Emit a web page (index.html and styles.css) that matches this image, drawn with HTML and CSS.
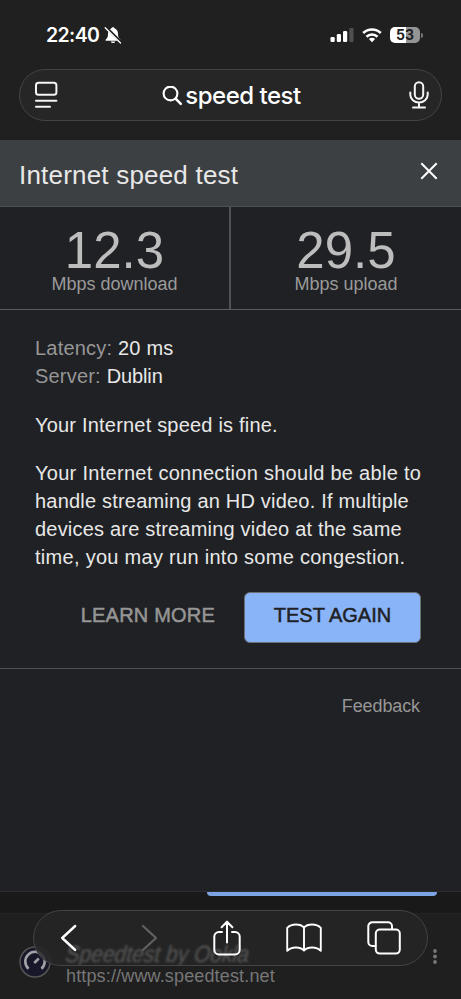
FILE: index.html
```html
<!DOCTYPE html>
<html lang="en">
<head>
<meta charset="utf-8">
<title>speed test</title>
<link rel="stylesheet" href="styles.css">
</head>
<body>
<div class="phone">
  <header class="chrome">
    <div class="status">
      <div class="status-left">
        <span class="clock">22:40</span>
        <svg width="18" height="19" viewBox="0 0 18 19"><path d="M9 1.300C8 1.300 7.400 1.900 7.200 2.600 4.700 3.500 4 5.600 4 8c0 3-.6 3.700-2 5.200-.8.9-.5 1.500.4 1.500h13.200c.9 0 1.200-.6.4-1.500-1.400-1.500-2-2.200-2-5.200 0-2.400-.7-4.500-3.200-5.400C10.600 1.900 10 1.300 9 1.300zM6.700 15.600a2.400 2.100 0 0 0 4.600 0z" fill="#fff"/><path d="M1.900 1.200 17 16.300" stroke="#202020" stroke-width="2.800"/><path d="M1.200 1.700 16.500 17" stroke="#fff" stroke-width="1.300" stroke-linecap="round"/></svg>
      </div>
      <div class="status-right">
        <svg width="24" height="16" viewBox="0 0 24 16"><rect x="0.500" y="10" width="4.200" height="5" rx="1.200" fill="#fff"/><rect x="6.800" y="7" width="4.200" height="8" rx="1.200" fill="#fff"/><rect x="13" y="4" width="4.200" height="11" rx="1.200" fill="#fff"/><rect x="19.300" y="1" width="4.200" height="14" rx="1.200" fill="#505050"/></svg>
        <svg class="wifi" width="20" height="16" viewBox="0 0 20 16" fill="none" stroke="#fff" stroke-width="2.600"><path d="M1.200 6a12.700 12.700 0 0 1 17.600 0M4.500 9.700a8 8 0 0 1 11 0"/><path d="M10 15.200 6.900 12.100a4.400 4.400 0 0 1 6.200 0z" fill="#fff" stroke="none"/></svg>
        <div class="battery"><span>53</span></div>
        <i class="battery-cap"></i>
      </div>
    </div>
    <div class="search">
      <svg width="24" height="28" viewBox="0 0 24 28" fill="none" stroke="#f5f5f5" stroke-width="2" stroke-linecap="round"><rect x="2" y="1.700" width="20.400" height="12" rx="2.500"/><path d="M2 19.700h20.400M2 25.800h14"/></svg>
      <div class="query">
        <svg width="20" height="20" viewBox="0 0 20 20" fill="none" stroke="#fff" stroke-width="2.100" stroke-linecap="round"><circle cx="8.500" cy="7.500" r="6.900"/><path d="m13.800 12.800 5 5" stroke-width="2.600"/></svg>
        <span>speed test</span>
      </div>
      <svg width="20" height="28" viewBox="0 0 20 28" fill="none" stroke="#f5f5f5" stroke-width="2" stroke-linecap="round"><rect x="5.800" y="1.200" width="8.400" height="16.600" rx="4.200"/><path d="M1.300 11.500v2.200a8.700 7.700 0 0 0 17.400 0v-2.200M10 21.500v4.600M4 26.500h12"/></svg>
    </div>
  </header>

  <main class="card">
    <div class="card-head">
      <h1>Internet speed test</h1>
      <svg width="18" height="18" viewBox="0 0 18 18" stroke="#fff" stroke-width="2"><path d="m1.300 1.300 15.400 15.400M16.700 1.300 1.300 16.700"/></svg>
    </div>
    <div class="metrics">
      <div class="metric"><strong>12.3</strong><span>Mbps download</span></div>
      <div class="metric"><strong>29.5</strong><span>Mbps upload</span></div>
    </div>
    <div class="details">
      <p><span class="muted">Latency:</span> 20 ms<br><span class="muted">Server:</span> <span class="tight">Dublin</span></p>
      <p>Your Internet speed is fine.</p>
      <p class="summary"><span class="wide">Your Internet connection should be able to</span><br>handle streaming an HD video. If multiple<br>devices are streaming video at the same<br><span class="wide">time, you may run into some congestion.</span></p>
      <div class="actions">
        <a class="learn">LEARN MORE</a>
        <button class="again">TEST AGAIN</button>
      </div>
    </div>
    <div class="feedback">Feedback</div>
  </main>

  <div class="gap"><i class="tab-edge"></i></div>

  <section class="result">
    <svg class="favicon" width="32" height="32" viewBox="0 0 32 32" fill="none"><circle cx="16" cy="16" r="15" fill="#171729" stroke="#555" stroke-width="1.500"/><path d="M9.600 22.800A9.700 9.700 0 1 1 22.400 22.800" stroke="#a2a2a6" stroke-width="2.600"/><path d="m15.200 17 4.600-4.500" stroke="#a2a2a6" stroke-width="2.600"/></svg>
    <div class="result-text">
      <div class="result-title">Speedtest by Ookla</div>
      <div class="result-url">https://www.speedtest.net</div>
    </div>
    <svg class="more" width="6" height="18" viewBox="0 0 6 18" fill="#777"><circle cx="3" cy="3" r="1.900"/><circle cx="3" cy="8.500" r="1.900"/><circle cx="3" cy="14" r="1.900"/></svg>
  </section>

  <nav class="toolbar">
    <svg width="18" height="28" viewBox="0 0 18 28" fill="none" stroke="#fff" stroke-width="2.400" stroke-linecap="round" stroke-linejoin="round"><path d="M15.200 2 2.200 14l13 12"/></svg>
    <svg class="forward" width="18" height="28" viewBox="0 0 18 28" fill="none" stroke="#606060" stroke-width="2.300" stroke-linecap="round" stroke-linejoin="round"><path d="m2 2 13 12-13 12"/></svg>
    <svg class="share" width="28" height="36" viewBox="0 0 28 36" fill="none" stroke="#fff" stroke-width="2" stroke-linecap="round" stroke-linejoin="round"><path d="M9 12H6a4.700 4.700 0 0 0-4.700 4.700v13A4.700 4.700 0 0 0 6 34.400h16a4.700 4.700 0 0 0 4.700-4.700v-13A4.700 4.700 0 0 0 22 12h-3M14 22.500V1.700M8.600 7.200l5.400-5.500 5.400 5.500"/></svg>
    <svg class="book" width="36" height="30" viewBox="0 0 36 30" fill="none" stroke="#fff" stroke-width="1.900" stroke-linejoin="round"><path d="M18 4.500C14.500.5 5.500.3 1.200 4.800v23c4.300-4.300 12.800-4.500 16.800-.3 4-4.200 12.500-4 16.800.3v-23C30.500.3 21.500.5 18 4.500v23"/></svg>
    <svg width="34" height="34" viewBox="0 0 34 34" fill="none" stroke="#fff" stroke-width="2"><path d="M8.500 25H5.300a4 4 0 0 1-4-4V5.300a4 4 0 0 1 4-4H21a4 4 0 0 1 4 4v3.200"/><rect x="8.800" y="8.600" width="24" height="24" rx="4"/></svg>
  </nav>
</div>
</body>
</html>
```

FILE: styles.css
```css
* { box-sizing: border-box; }
body {
  margin: 0;
  background: #1c1c1c;
  font-family: "Liberation Sans", Arial, sans-serif;
  color: #e8e8e8;
}
svg { display: block; flex: none; }
.phone {
  position: relative;
  width: 461px;
  height: 999px;
  overflow: hidden;
  display: flex;
  flex-direction: column;
}
.chrome { height: 140px; background: #202020; padding: 24px 19px 0; }
.status {
  height: 22px;
  display: flex;
  justify-content: space-between;
  padding: 0 19px 0 27px;
}
.status-left, .status-right { display: flex; align-items: center; }
.status-left { gap: 5px; }
.clock {
  font: 600 19.500px/22px Inter, sans-serif;
  color: #fff;
  letter-spacing: -0.600px;
}
.wifi { margin: 0 8px 0 8px; }
.status-right > svg:first-child { margin-left: 1px; }
.battery {
  width: 30px;
  height: 16px;
  border-radius: 5px;
  background: linear-gradient(90deg, #fff 53%, #949494 53%);
  color: #202020;
  font: 700 14px/16px Inter, sans-serif;
  text-align: center;
}
.battery-cap { width: 2px; height: 5px; margin-left: 1px; border-radius: 0 2px 2px 0; background: #777; }
.search {
  height: 52px;
  margin-top: 23px;
  padding: 0 12px 0 14px;
  border: 1px solid #444;
  border-radius: 26px;
  background: #262626;
  display: flex;
  align-items: center;
  justify-content: space-between;
}
.query {
  display: flex;
  align-items: center;
  gap: 3px;
  color: #fff;
  font: 500 24px/30px Inter, sans-serif;
  letter-spacing: -0.500px;
  margin: 2px 4px 0 0;
}
.card { height: 752px; background: #202124; border-bottom: 1px solid #2c2e31; }
.card-head {
  height: 67px;
  background: #3c4043;
  border-bottom: 1px solid #4d5053;
  padding: 4px 23px 0 19px;
  display: flex;
  align-items: center;
  justify-content: space-between;
}
.card-head svg { margin-top: -8px; }
h1 { margin: 0; font-size: 26px; line-height: 34px; font-weight: 400; letter-spacing: 0.200px; }
.metrics {
  height: 103px;
  display: grid;
  grid-template-columns: 231px 230px;
  border-bottom: 1px solid #5a5b5e;
}
.metric { display: flex; flex-direction: column; align-items: center; padding-top: 21px; }
.metric:first-child { border-right: 2px solid #505154; }
.metric strong { font-size: 51px; line-height: 45px; font-weight: 400; color: #bdbdbd; }
.metric span { font-size: 18px; line-height: 22px; color: #9a9a9a; }
.details {
  height: 359px;
  padding: 24px 40px 0 35px;
  border-bottom: 1px solid #4e5053;
  font-size: 20px;
  line-height: 28px;
  letter-spacing: 0.200px;
}
p { margin: 0 0 21px; white-space: nowrap; }
p + p { margin-bottom: 20px; }
.wide { letter-spacing: 0.290px; }
.tight { letter-spacing: -0.100px; }
.muted { color: #969696; }
.actions { display: flex; justify-content: flex-end; align-items: center; gap: 29px; padding-top: 1px; }
.learn { font-size: 20px; font-weight: 400; color: #969696; -webkit-text-stroke: 0.500px #969696; margin-top: -5px; }
.again {
  width: 177px;
  height: 51px;
  border: 1px solid #6b7075;
  border-radius: 6px;
  background: #8ab4f8;
  color: #202124;
  font: 400 20px/28px "Liberation Sans", Arial, sans-serif;
  -webkit-text-stroke: 0.500px #202124;
  padding: 0 0 5px;
}
.feedback { padding: 26px 41px 0 0; text-align: right; font-size: 18px; line-height: 22px; letter-spacing: -0.100px; color: #969696; }
.gap { height: 21px; background: #191919; padding-left: 207px; }
.tab-edge { display: block; width: 230px; height: 4px; border-radius: 0 0 6px 6px; background: #7da4e2; }
.result {
  height: 86px;
  background: #1f1f1f;
  border-top: 1px solid #242424;
  display: flex;
  padding: 31px 23px 0 19px;
}
.favicon { margin-top: 1px; }
.result-text { flex: 1; padding-left: 15px; }
.result-title {
  width: 188px;
  font-size: 21px;
  line-height: 20px;
  height: 20px;
  color: #e4e4e4;
  transform: translateY(-1px) skewX(-14deg) scaleY(1.12);
  clip-path: inset(-4px -4px 0 -4px);
  white-space: nowrap;
}
.result-url { font-size: 18px; line-height: 22px; letter-spacing: 0.150px; color: #777; white-space: nowrap; }
.more { margin-top: 3px; }
.toolbar {
  position: absolute;
  left: 33px;
  top: 910px;
  width: 395px;
  height: 56px;
  border: 1px solid #444;
  border-radius: 28px;
  background: rgba(38, 38, 38, 0.760);
  backdrop-filter: blur(1px);
  display: flex;
  align-items: center;
  justify-content: space-between;
  padding: 0 26px;
}
.forward { margin-left: 23px; }
.share { margin-left: 14px; }
.book { margin-left: 5px; margin-right: 5px; }
```
